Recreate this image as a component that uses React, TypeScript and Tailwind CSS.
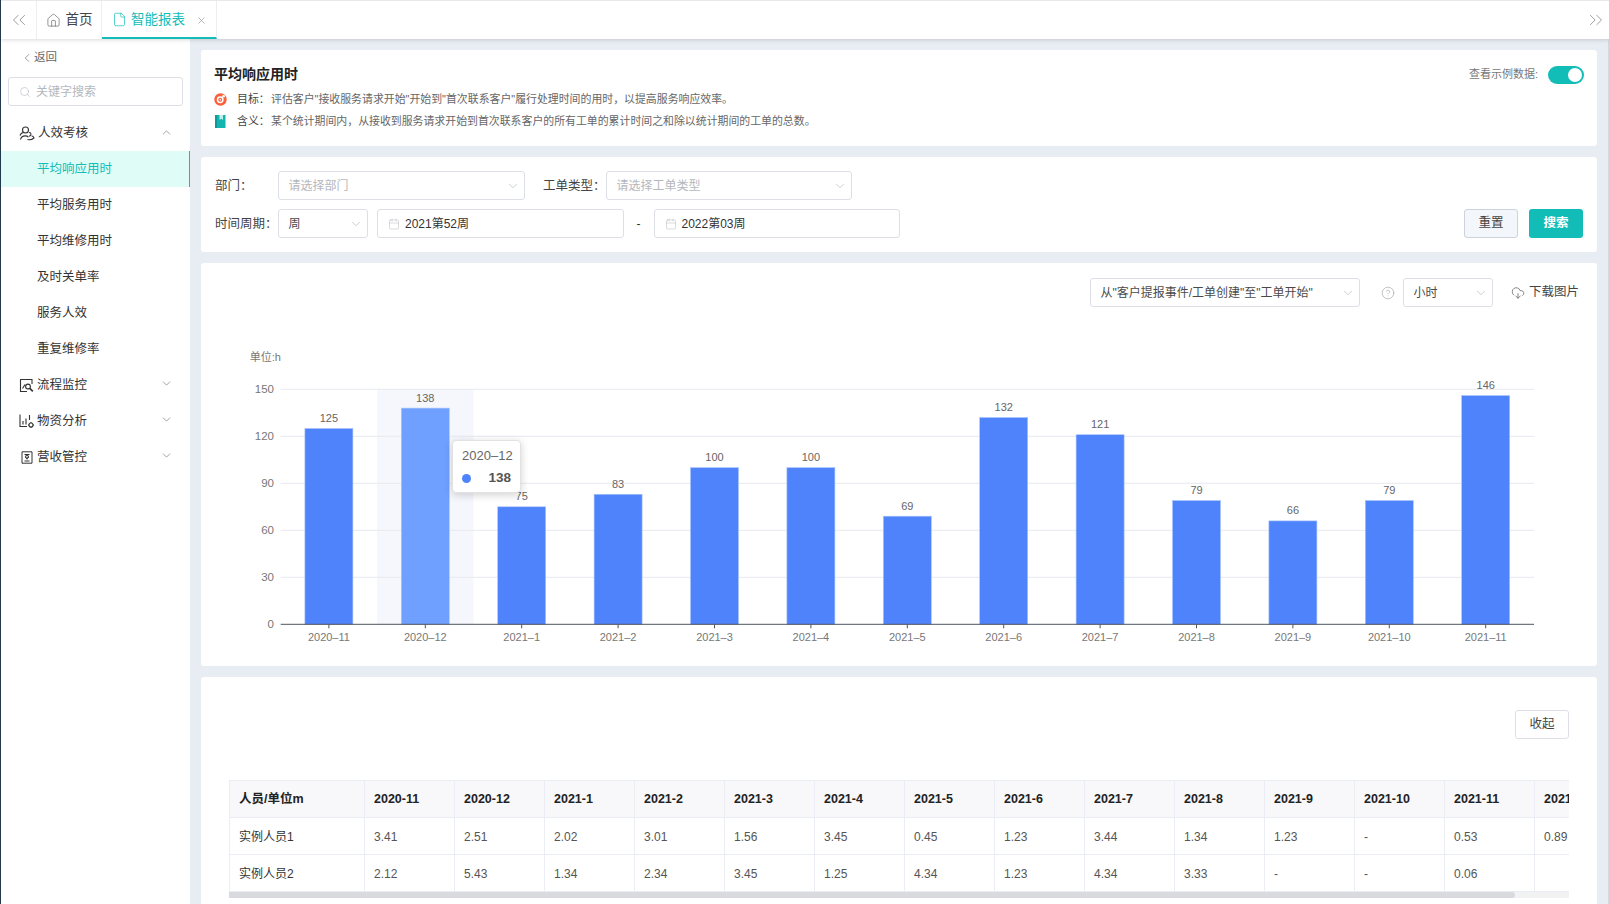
import { ChevronsLeft, ChevronsRight, Home, File, X, ChevronLeft, ChevronUp, ChevronDown, Search, Calendar, CircleHelp, CloudDownload } from 'lucide-react';

const FONT = '"Liberation Sans", "Noto Sans CJK SC", sans-serif';

const subMenu = ['平均响应用时', '平均服务用时', '平均维修用时', '及时关单率', '服务人效', '重复维修率'];

const goalText = '评估客户"接收服务请求开始"开始到"首次联系客户"履行处理时间的用时\uFF0C以提高服务响应效率\u3002';
const meaningText = '某个统计期间内\uFF0C从接收到服务请求开始到首次联系客户的所有工单的累计时间之和除以统计期间的工单的总数\u3002';

const chartData = [
  { label: '2020-11', value: 125 },
  { label: '2020-12', value: 138 },
  { label: '2021-1', value: 75 },
  { label: '2021-2', value: 83 },
  { label: '2021-3', value: 100 },
  { label: '2021-4', value: 100 },
  { label: '2021-5', value: 69 },
  { label: '2021-6', value: 132 },
  { label: '2021-7', value: 121 },
  { label: '2021-8', value: 79 },
  { label: '2021-9', value: 66 },
  { label: '2021-10', value: 79 },
  { label: '2021-11', value: 146 },
];

const tableHead = ['2020-11', '2020-12', '2021-1', '2021-2', '2021-3', '2021-4', '2021-5', '2021-6', '2021-7', '2021-8', '2021-9', '2021-10', '2021-11', '2021-12'];
const tableRows = [
  { name: '实例人员1', cells: ['3.41', '2.51', '2.02', '3.01', '1.56', '3.45', '0.45', '1.23', '3.44', '1.34', '1.23', '-', '0.53', '0.89'] },
  { name: '实例人员2', cells: ['2.12', '5.43', '1.34', '2.34', '3.45', '1.25', '4.34', '1.23', '4.34', '3.33', '-', '-', '0.06', ''] },
];

function PeopleIcon() {
  return (
    <svg width="16" height="15" viewBox="0 0 16 15" fill="none" stroke="#333" strokeWidth="1.1">
      <circle cx="6.5" cy="4" r="3" />
      <path d="M1 9.5c.8-2 2.2-3 3.6-3M1.5 13.5c.6-2.2 2.4-3.6 4.6-3.6 1.4 0 2.6.5 3.4 1.3" />
      <path d="M10 6.5c1.2 0 2 .8 2 1.8s-.8 1.8-2 1.8" />
      <path d="M8.5 13.5c1.6.4 4.5.2 6.5-1.5-.3-1.2-1.2-2-2.4-2.3" />
    </svg>
  );
}

function MonitorIcon() {
  return (
    <svg width="15" height="15" viewBox="0 0 15 15" fill="none" stroke="#333" strokeWidth="1.1">
      <path d="M13 6V1.5H1.5v12H8" />
      <path d="M3.5 10.5 6 6.5" />
      <circle cx="9" cy="8.5" r="2.4" />
      <path d="m10.8 10.4 3 3" strokeWidth="1.6" />
    </svg>
  );
}

function StockIcon() {
  return (
    <svg width="15" height="15" viewBox="0 0 15 15" fill="none" stroke="#333" strokeWidth="1.1">
      <path d="M1 .5v12h7" />
      <path d="M4 7v3.5M7 4.5v6M10.5 1v5" />
      <circle cx="12" cy="11" r="2" />
      <path d="M12 8v1M12 13v1M9 11h1M14 11h1" />
    </svg>
  );
}

function RevenueIcon() {
  return (
    <svg width="12" height="13" viewBox="0 0 12 13" fill="none" stroke="#333" strokeWidth="1">
      <path d="M1 .8h10v11.4H1z" />
      <path d="M3.5 3.5h5M6 5.5v3M3.5 10h5" />
      <circle cx="6" cy="5.8" r="1.6" />
    </svg>
  );
}

function TargetIcon() {
  return (
    <svg width="13" height="13" viewBox="0 0 13 13" className="shrink-0">
      <circle cx="6.5" cy="6.5" r="6.2" fill="#f8613a" />
      <circle cx="6.2" cy="6.8" r="2.7" fill="none" stroke="#fff" strokeWidth="1.5" />
      <circle cx="9.6" cy="3.2" r="1.3" fill="#fff" />
      <circle cx="6.2" cy="6.8" r="0.8" fill="#fff" />
    </svg>
  );
}

function BookIcon() {
  return (
    <svg width="12" height="13" viewBox="0 0 12 13" className="shrink-0">
      <path d="M1 0h10.5v13H1z" fill="#12b5b0" />
      <path d="M1 0h2v13H1z" fill="#0f9a9a" />
      <path d="M5.5 0h3.5v5L7.2 3.7 5.5 5z" fill="#bff1ec" />
    </svg>
  );
}

function FakeSelect({ text, placeholder, className }: { text: string; placeholder?: boolean; className: string }) {
  return (
    <div className={`flex items-center justify-between h-[29px] pl-[9.5px] pr-[4px] bg-white border border-[#dcdfe6] rounded-[3px] text-[12px] ${className}`}>
      <span className={`whitespace-nowrap ${placeholder ? 'text-[#b4b7bd]' : 'text-[#4a4a4a]'}`}>{text}</span>
      <ChevronDown size={14} strokeWidth={1} className="text-[#a8abb2] shrink-0" />
    </div>
  );
}

function DateBox({ text }: { text: string }) {
  return (
    <div className="flex items-center gap-[5px] w-[246.5px] h-[29px] px-[10px] bg-white border border-[#dcdfe6] rounded-[3px] text-[12px] text-[#333]">
      <Calendar size={12} strokeWidth={1} className="text-[#b4b7bd]" />
      <span>{text}</span>
    </div>
  );
}

function Chart() {
  const x0 = 79.7;
  const band = 96.4;
  const base = 304.3;
  const unit = 235 / 150;
  return (
    <div className="relative w-[1396px] h-[343px]">
      <svg width="1396" height="343" viewBox="0 0 1396 343" className="block" fontFamily={FONT}>
        <text x="80" y="41" fontSize="11" fill="#777" textAnchor="end">单位:h</text>
        <rect x={x0 + band} y="69.3" width={band} height="235" fill="#f5f7fc" />
        {[0, 30, 60, 90, 120, 150].map(v => {
          const y = base - v * unit;
          return (
            <g key={v}>
              {v > 0 && <line x1={x0} x2="1333" y1={y} y2={y} stroke="#e6e9f0" />}
              <text x="73" y={y + 4} fontSize="11.5" fill="#777" textAnchor="end">{v}</text>
            </g>
          );
        })}
        {chartData.map((d, i) => {
          const cx = x0 + band * i + band / 2;
          const h = d.value * unit;
          return (
            <g key={d.label}>
              <rect x={cx - 24} y={base - h} width="48" height={h} fill={i === 1 ? '#6f9fff' : '#4f83fb'} stroke="#a9c3fd" strokeWidth="0.6" />
              <text x={cx} y={base - h - 6.5} fontSize="11" fill="#666" textAnchor="middle">{d.value}</text>
              <line x1={cx} x2={cx} y1={base} y2={base + 4} stroke="#555" />
              <text x={cx} y={base + 17} fontSize="11" fill="#777" textAnchor="middle">{d.label.replace('-', '–')}</text>
            </g>
          );
        })}
        <line x1={x0} x2="1333" y1={base} y2={base} stroke="#4f5460" />
      </svg>
      {/* tooltip floats over the chart */}
      <div className="absolute left-[251px] top-[120px] w-[69px] h-[53px] px-[9px] pt-[6px] bg-white border border-[#e2e2e2] rounded-[4px] shadow-[0_2px_8px_rgba(0,0,0,0.18)]">
        <div className="text-[13px] leading-[18px] text-[#666] whitespace-nowrap">2020–12</div>
        <div className="flex items-center justify-between mt-[5px] text-[13.5px] leading-[16px] font-bold text-[#555]">
          <span className="w-[9px] h-[9px] rounded-full bg-[#4f83fb]" />
          <span>138</span>
        </div>
      </div>
    </div>
  );
}

export default function App() {
  return (
    <div className="relative w-[1609px] h-[904px] overflow-hidden flex flex-col bg-[#e8ecf3] text-[#333] border-l border-[#24384f]" style={{ fontFamily: FONT }}>
      {/* active marker of the collapsed nav behind the sidebar */}
      <div className="absolute -left-px top-[313px] w-[1px] h-[42px] bg-[#12bdb8] z-20" />

      {/* top tab bar */}
      <div className="flex h-[39px] shrink-0 bg-white border-t border-[#e8e8e8] shadow-[0_1px_4px_rgba(0,0,0,0.15)] relative z-10">
        <div className="w-[36px] flex items-center justify-center border-r border-[#eceef2]">
          <ChevronsLeft size={22} strokeWidth={0.9} className="text-[#888]" />
        </div>
        <div className="w-[65px] flex items-center justify-center gap-[5px] border-r border-[#eceef2] text-[13.5px] text-[#444]">
          <Home size={15} strokeWidth={1.1} className="text-[#666]" />
          <span className="pt-[1px]">首页</span>
        </div>
        <div className="w-[115px] flex items-center pl-[10px] gap-[4px] border-r border-b-2 border-r-[#eceef2] border-b-[#12bdb8] text-[13.5px] text-[#12bdb8]">
          <File size={15} strokeWidth={1.1} />
          <span className="pt-[2px]">智能报表</span>
          <X size={11} strokeWidth={1.8} className="ml-[7px] mt-[2px] text-[#aaa]" />
        </div>
        <div className="flex-1" />
        <div className="w-[24px] flex items-center">
          <ChevronsRight size={22} strokeWidth={0.9} className="text-[#888]" />
        </div>
      </div>

      <div className="flex flex-1 min-h-0">
        {/* sidebar */}
        <div className="w-[189px] shrink-0 bg-white">
          <div className="flex items-center h-[36px] pt-[2px] pl-[19px] text-[11.5px] text-[#666]">
            <ChevronLeft size={14} strokeWidth={1.1} />
            <span>返回</span>
          </div>
          <div className="flex items-center h-[29px] mx-[7px] mt-[2px] pl-[10px] gap-[5px] border border-[#dcdfe6] rounded-[3px] text-[12px] text-[#b4b7bd]">
            <Search size={12} strokeWidth={1.2} />
            <span>关键字搜索</span>
          </div>
          <div className="mt-[9px]">
            <div className="flex items-center h-[36px] pl-[18px] pr-[17px] gap-[3px] text-[12.5px]">
              <PeopleIcon />
              <span className="flex-1">人效考核</span>
              <ChevronUp size={13} strokeWidth={1.1} className="mb-[2px] text-[#666]" />
            </div>
            {subMenu.map((m, i) => (
              <div key={m} className={`flex items-center h-[36px] pl-[36px] text-[12.5px] ${i === 0 ? 'bg-[#e0fcf7] text-[#12bdb8] border-r border-[#12bdb8]' : 'text-[#333]'}`}>{m}</div>
            ))}
            <div className="flex items-center h-[36px] pl-[18px] pr-[17px] gap-[3px] text-[12.5px]">
              <MonitorIcon />
              <span className="flex-1">流程监控</span>
              <ChevronDown size={13} strokeWidth={1.1} className="mb-[3px] text-[#666]" />
            </div>
            <div className="flex items-center h-[36px] pl-[18px] pr-[17px] gap-[3px] text-[12.5px]">
              <StockIcon />
              <span className="flex-1">物资分析</span>
              <ChevronDown size={13} strokeWidth={1.1} className="mb-[3px] text-[#666]" />
            </div>
            <div className="flex items-center h-[36px] pl-[20px] pr-[17px] gap-[4px] text-[12.5px]">
              <RevenueIcon />
              <span className="flex-1">营收管控</span>
              <ChevronDown size={13} strokeWidth={1.1} className="mb-[3px] text-[#666]" />
            </div>
          </div>
        </div>

        {/* main content */}
        <div className="w-[1396px] ml-[11px] pt-[11px] flex flex-col gap-[11px] shrink-0">
          <div className="h-[96px] bg-white rounded-[3px] pl-[13px] pr-[13px] pt-[14px] flex justify-between">
            <div>
              <div className="text-[14px] leading-[20px] font-bold text-[#222]">平均响应用时</div>
              <div className="flex items-center mt-[7px] h-[16px] text-[10.9px] text-[#666]">
                <TargetIcon />
                <span className="ml-[10px] w-[34px] text-[#444]">{'目标\uFF1A'}</span>
                <span>{goalText}</span>
              </div>
              <div className="flex items-center mt-[6px] h-[16px] text-[10.9px] text-[#666]">
                <BookIcon />
                <span className="ml-[11px] w-[34px] text-[#444]">{'含义\uFF1A'}</span>
                <span>{meaningText}</span>
              </div>
            </div>
            <div className="flex items-start gap-[10px] pt-[2px]">
              <span className="text-[11px] leading-[16px] text-[#777]">查看示例数据:</span>
              <div className="relative w-[36px] h-[18px] rounded-full bg-[#12bdb8]">
                <span className="absolute right-[2px] top-[2px] w-[14px] h-[14px] rounded-full bg-white" />
              </div>
            </div>
          </div>

          <div className="h-[95px] bg-white rounded-[3px] pl-[14px] pr-[14px] pt-[14px] flex flex-col gap-[9px]">
            <div className="flex items-center">
              <span className="w-[63px] pt-[2px] text-[12.5px] text-[#444]">{'部门\uFF1A'}</span>
              <FakeSelect text="请选择部门" placeholder className="w-[247px]" />
              <span className="w-[63px] ml-[18px] pt-[2px] text-[12.5px] text-[#444] whitespace-nowrap">{'工单类型\uFF1A'}</span>
              <FakeSelect text="请选择工单类型" placeholder className="w-[246px]" />
            </div>
            <div className="flex items-center">
              <span className="w-[63px] pt-[2px] text-[12.5px] text-[#444] whitespace-nowrap">{'时间周期\uFF1A'}</span>
              <FakeSelect text="周" className="w-[90px] mr-[9px]" />
              <DateBox text="2021第52周" />
              <span className="w-[30px] text-center text-[12px]">-</span>
              <DateBox text="2022第03周" />
              <div className="flex-1" />
              <div className="w-[54px] h-[29px] flex items-center justify-center mr-[11px] bg-[#f3f6fa] border border-[#ccd3dc] rounded-[3px] text-[12.5px] text-[#444]">重置</div>
              <div className="w-[54px] h-[29px] flex items-center justify-center bg-[#12bdb8] rounded-[3px] text-[12.5px] font-bold text-white">搜索</div>
            </div>
          </div>

          <div className="h-[403px] bg-white rounded-[3px] flex flex-col">
            <div className="flex items-center justify-end h-[29px] mt-[15px] pr-[18px] shrink-0">
              <FakeSelect text={'从"客户提报事件/工单创建"至"工单开始"'} className="w-[270px]" />
              <CircleHelp size={14} strokeWidth={1} className="ml-[21px] mr-[-1px] text-[#999]" />
              <FakeSelect text="小时" className="w-[90px] ml-[9px]" />
              <CloudDownload size={14} strokeWidth={1.2} className="ml-[18px] text-[#555]" />
              <span className="ml-[4px] text-[12.5px] text-[#444]">下载图片</span>
            </div>
            <div className="mt-[13px]">
              <Chart />
            </div>
          </div>

          <div className="flex-1 min-h-0 bg-white rounded-t-[3px] pl-[28px] pr-[28px] overflow-hidden">
            <div className="flex justify-end pt-[33px]">
              <div className="w-[54px] h-[29px] flex items-center justify-center border border-[#dcdfe6] rounded-[3px] text-[12.5px] text-[#444]">收起</div>
            </div>
            <div className="mt-[41px] w-[1340px] overflow-hidden">
              <table className="table-fixed w-[1395px] border-collapse text-[12px]">
                <colgroup>
                  <col className="w-[135px]" />
                  {tableHead.map(h => <col key={h} className="w-[90px]" />)}
                </colgroup>
                <thead>
                  <tr className="h-[37px] bg-[#f8f8fa] text-[12.5px]">
                    <th className="border border-[#ebedf4] pl-[9px] text-left font-bold text-[#222]">人员/单位m</th>
                    {tableHead.map(h => <th key={h} className="border border-[#ebedf4] pl-[9px] text-left font-bold text-[#222] whitespace-nowrap">{h}</th>)}
                  </tr>
                </thead>
                <tbody>
                  {tableRows.map(r => (
                    <tr key={r.name} className="h-[37px]">
                      <td className="border border-[#ebedf4] pl-[9px] pt-[1px] text-[#333]">{r.name}</td>
                      {r.cells.map((c, i) => <td key={i} className="border border-[#ebedf4] pl-[9px] pt-[1px] text-[#555]">{c}</td>)}
                    </tr>
                  ))}
                </tbody>
              </table>
              <div className="h-[6px] bg-[#f2f2f2]">
                <div className="w-[1286px] h-[6px] bg-[#d8dade] rounded-r-[3px]" />
              </div>
            </div>
          </div>
        </div>
        <div className="flex-1 border-r border-[#d5d8de]" />
      </div>
    </div>
  );
}
